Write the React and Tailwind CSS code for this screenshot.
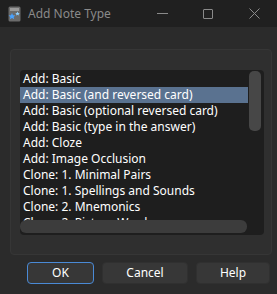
import React from "react";

const items = [
    "Add: Basic",
    "Add: Basic (and reversed card)",
    "Add: Basic (optional reversed card)",
    "Add: Basic (type in the answer)",
    "Add: Cloze",
    "Add: Image Occlusion",
    "Clone: 1. Minimal Pairs",
    "Clone: 1. Spellings and Sounds",
    "Clone: 2. Mnemonics",
    "Clone: 2. Picture Words",
];

function AppIcon() {
    return (
        <svg width="13" height="16" viewBox="0 0 13 16">
            <rect x="0.5" y="0.5" width="12" height="15" rx="1.5" fill="#6b6b6b" />
            <rect x="2" y="2" width="9" height="3" fill="#9a9a9a" />
            <path d="M4 7 L5 9.2 L7.4 9.4 L5.6 10.9 L6.2 13.2 L4 12 L1.8 13.2 L2.4 10.9 L0.6 9.4 L3 9.2 Z" fill="#4aa3ff" />
            <path d="M9.5 5.5 L10.2 7 L11.8 7.1 L10.6 8.1 L11 9.6 L9.5 8.8 L8 9.6 L8.4 8.1 L7.2 7.1 L8.8 7 Z" fill="#8fd0ff" />
        </svg>
    );
}

export default function App() {
    return (
        <div
            className="w-[277px] h-[294px] bg-[#2b2b2b] flex flex-col overflow-hidden"
            style={{ fontFamily: "'Noto Sans', 'Open Sans', sans-serif" }}
        >
            {/* TITLE BAR */}
            <div className="h-[27px] bg-[#202020] flex items-center shrink-0">
                <div className="ml-[8px] mr-[7px] flex items-center">
                    <AppIcon />
                </div>
                <span className="text-[12px] text-[#8a8a8a] leading-none">Add Note Type</span>
                <div className="ml-auto flex items-center h-full">
                    <div className="w-[46px] flex justify-center">
                        <div className="w-[11px] h-px bg-[#8a8a8a]" />
                    </div>
                    <div className="w-[46px] flex justify-center">
                        <div className="w-[10px] h-[10px] border border-[#8a8a8a] rounded-[1px]" />
                    </div>
                    <div className="w-[46px] flex justify-center">
                        <svg width="11" height="11" viewBox="0 0 11 11">
                            <path d="M0.5 0.5 L10.5 10.5 M10.5 0.5 L0.5 10.5" stroke="#8a8a8a" strokeWidth="1" />
                        </svg>
                    </div>
                </div>
            </div>

            {/* GROUP PANEL */}
            <div className="mt-[22px] ml-[10px] mr-[5px] h-[206px] bg-[#2f2f2f] border border-[#363636] rounded-[4px] pl-[9px] pr-[7px] pt-[20px] pb-[19px] flex">
                <div className="relative flex-1 bg-[#1e1e1e] rounded-[4px] overflow-hidden pt-px">
                    {items.map((item, i) => (
                        <div
                            key={item}
                            className={`h-[16px] pl-[3px] mr-[16px] text-[12px] leading-[16px] text-white whitespace-nowrap ${i === 1 ? "bg-[#5a7290]" : ""}`}
                        >
                            {item}
                        </div>
                    ))}
                    {/* scrollbars */}
                    <div className="absolute top-px right-[3px] w-[12px] h-[60px] rounded-[5px] bg-[#474747]" />
                    <div className="absolute left-0 bottom-[2px] w-[227px] h-[13px] rounded-[6px] bg-[#3c3c3c]" />
                </div>
            </div>

            {/* BUTTONS */}
            <div className="flex mt-[7px] ml-[27px] gap-[8px]">
                <button className="w-[67px] h-[22px] rounded-[4px] bg-[#373737] border border-[#4a8ad6] text-white text-[12px]">
                    OK
                </button>
                <button className="w-[86px] h-[22px] rounded-[4px] bg-[#373737] border border-[#303030] text-white text-[12px]">
                    Cancel
                </button>
                <button className="w-[74px] h-[22px] rounded-[4px] bg-[#373737] border border-[#303030] text-white text-[12px]">
                    Help
                </button>
            </div>
        </div>
    );
}
